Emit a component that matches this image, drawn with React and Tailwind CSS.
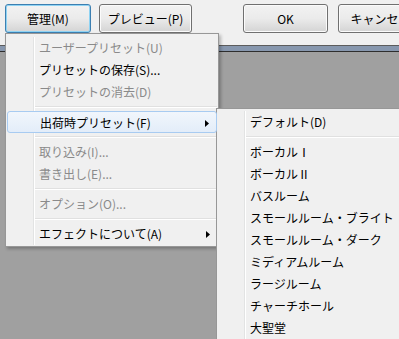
import React from 'react';

const mainItems = [
  { label: 'ユーザープリセット(U)', disabled: true },
  { label: 'プリセットの保存(S)...' },
  { label: 'プリセットの消去(D)', disabled: true },
  { sep: true },
  { label: '出荷時プリセット(F)', sub: true, active: true },
  { sep: true },
  { label: '取り込み(I)...', disabled: true },
  { label: '書き出し(E)...', disabled: true },
  { sep: true },
  { label: 'オプション(O)...', disabled: true },
  { sep: true },
  { label: 'エフェクトについて(A)', sub: true }
];

const factoryItems = [
  { label: 'デフォルト(D)' },
  { sep: true },
  { label: 'ボーカルⅠ' },
  { label: 'ボーカルⅡ' },
  { label: 'バスルーム' },
  { label: 'スモールルーム・ブライト' },
  { label: 'スモールルーム・ダーク' },
  { label: 'ミディアムルーム' },
  { label: 'ラージルーム' },
  { label: 'チャーチホール' },
  { label: '大聖堂' }
];

const Arrow = () => (
  <svg width="4" height="7" viewBox="0 0 4 7" className="absolute right-[7px] top-[8px]">
    <path d="M0 0 L4 3.5 L0 7 Z" fill="#000" />
  </svg>
);

const MenuList = ({ items }) => (
  <div className="relative">
    <div className="absolute left-[26px] top-0 bottom-0 w-[2px] border-l border-l-[#e2e3e3] border-r border-r-white" />
    {items.map((item, i) =>
      item.sep ? (
        <div key={i} className="h-[8px] flex flex-col justify-center ml-[28px]">
          <div className="h-[1px] bg-[#e0e0e0]" />
          <div className="h-[1px] bg-white" />
        </div>
      ) : (
        <div
          key={i}
          className={`relative z-10 h-[22px] pl-[32px] leading-[22px] whitespace-nowrap rounded-[3px] ${
            item.active ? 'bg-gradient-to-b from-[#f1f6fc] to-[#e3edf9] border border-[#a8cbf1] leading-[20px] pl-[31px]' : ''
          } ${item.disabled ? 'text-[#8a8a8a]' : 'text-black'}`}
        >
          {item.label}
          {item.sub && <Arrow />}
        </div>
      )
    )}
  </div>
);

const WinButton = ({ children, focused, className = '' }) => (
  <div
    className={`shrink-0 h-[29px] flex items-center justify-center rounded-[3px] border bg-gradient-to-b from-[#f2f2f2] via-[#ebebeb] to-[#d4d4d4] ${
      focused ? 'border-[#3c7fb1] shadow-[inset_0_0_0_1px_#8fd3f3]' : 'border-[#707070] shadow-[inset_0_0_0_1px_#fbfbfb]'
    } ${className}`}
  >
    {children}
  </div>
);

const App = () => {
  return (
    <div className="relative w-[399px] h-[339px] overflow-hidden bg-[#a0a0a0] text-[12px] font-['Meiryo_UI','Noto_Sans_CJK_JP',sans-serif]">
      <div className="h-[45px] bg-[#f0f0f0] flex items-start pt-[4px] pl-[5px]">
        <WinButton focused className="w-[86px]">管理(M)</WinButton>
        <WinButton className="w-[93px] ml-[8px]">プレビュー(P)</WinButton>
        <WinButton className="w-[85px] ml-[51px]">OK</WinButton>
        <WinButton className="w-[85px] ml-[10px]">キャンセル</WinButton>
      </div>
      <div className="h-[1px] bg-[#5c5c5c]" />
      <div className="h-[5px] bg-[#8797ae]" />
      <div className="h-[1px] bg-[#2e2e2e]" />

      <div className="absolute left-[5px] top-[33px] w-[214px] border border-[#979797] bg-[#f0f0f0] pt-[3px] pb-[1px] px-[1px] shadow-[2px_2px_3px_rgba(0,0,0,0.25)]">
        <MenuList items={mainItems} />
      </div>

      <div className="absolute left-[216px] top-[108px] w-[200px] h-[250px] border border-[#979797] bg-[#f0f0f0] pt-[2px] px-[1px]">
        <MenuList items={factoryItems} />
      </div>
    </div>
  );
};

export default App;
